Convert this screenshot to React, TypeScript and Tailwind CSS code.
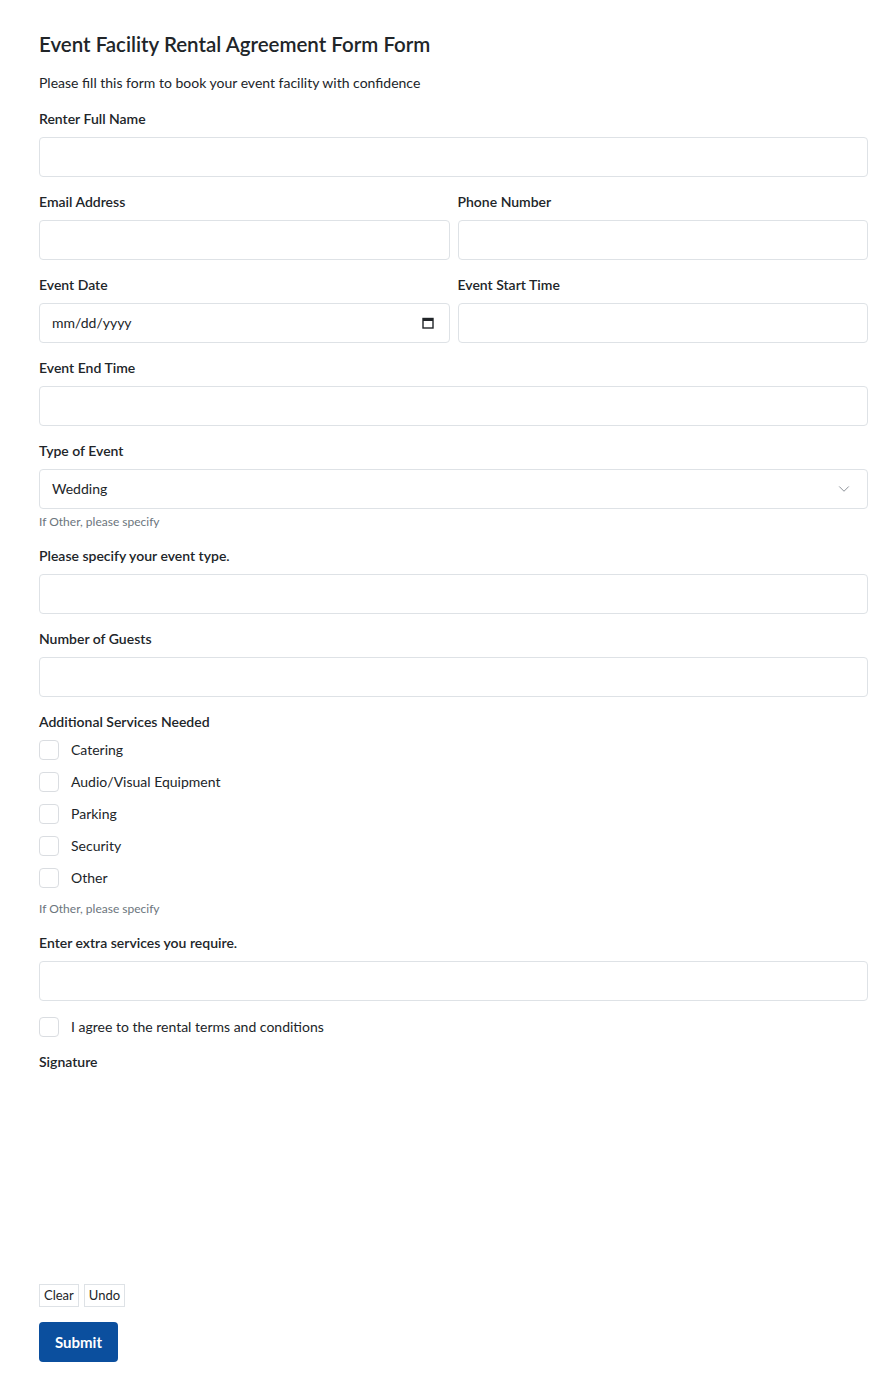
import { ChevronDown } from 'lucide-react';

const font = { fontFamily: 'Lato, "Noto Sans", sans-serif' };

function Label({ children }: { children: React.ReactNode }) {
  return <label className="block h-[21px] text-sm leading-[21px] font-semibold text-[#212529] mb-2">{children}</label>;
}

function TextInput() {
  return <input type="text" className="block w-full h-10 rounded-[4px] border border-[#dee2e6] bg-white px-3 text-sm text-[#212529] outline-none" />;
}

function Field({ label, children, help }: { label: string; children?: React.ReactNode; help?: string }) {
  return (
    <div className="mb-[14px] min-w-0">
      <Label>{label}</Label>
      {children ?? <TextInput />}
      {help && <p className="mt-1 h-[18px] text-xs leading-[18px] text-[#6c757d]">{help}</p>}
    </div>
  );
}

function Check({ label }: { label: string }) {
  return (
    <label className="flex items-center h-6 gap-3 text-sm text-[#212529]">
      <span className="w-5 h-5 rounded-[4px] border border-[#dadde1] bg-white shrink-0" />
      <span>{label}</span>
    </label>
  );
}

export default function App() {
  const services = ['Catering', 'Audio/Visual Equipment', 'Parking', 'Security', 'Other'];

  return (
    <div className="min-h-screen bg-white" style={font}>
      <form className="pl-[39px] pr-4 pt-[29px] pb-4" onSubmit={e => e.preventDefault()}>
        <h1 className="text-[20.5px] leading-[30px] font-semibold text-[#212529] mb-[13px]">Event Facility Rental Agreement Form Form</h1>
        <p className="text-sm leading-[21px] text-[#212529] mb-[15px]">Please fill this form to book your event facility with confidence</p>

        <Field label="Renter Full Name" />
        <div className="grid grid-cols-2 gap-x-2">
          <Field label="Email Address" />
          <Field label="Phone Number" />
          <Field label="Event Date">
            <div className="flex items-center justify-between w-full h-10 rounded-[4px] border border-[#dee2e6] bg-white pl-3 pr-[14px] text-sm text-[#212529]">
              <span>mm/dd/yyyy</span>
              <svg width="14" height="14" viewBox="0 0 14 14" fill="none">
                <rect x="2" y="2.5" width="10" height="9.5" stroke="#212529" strokeWidth="1.4" />
                <rect x="2" y="2.5" width="10" height="2.5" fill="#212529" />
              </svg>
            </div>
          </Field>
          <Field label="Event Start Time" />
        </div>
        <Field label="Event End Time" />
        <Field label="Type of Event" help="If Other, please specify">
          <div className="flex items-center justify-between w-full h-10 rounded-[4px] border border-[#dee2e6] bg-white pl-3 pr-[14px] text-sm text-[#212529]">
            <span>Wedding</span>
            <ChevronDown size={18} strokeWidth={1.3} className="text-[#8a8f96]" />
          </div>
        </Field>
        <Field label="Please specify your event type." />
        <Field label="Number of Guests" />

        <div className="mb-[14px]">
          <label className="block h-[21px] text-sm leading-[21px] font-semibold text-[#212529] mb-[6px]">Additional Services Needed</label>
          <div className="flex flex-col gap-2">
            {services.map(s => <Check key={s} label={s} />)}
          </div>
          <p className="mt-[10px] h-[18px] text-xs leading-[18px] text-[#6c757d]">If Other, please specify</p>
        </div>

        <Field label="Enter extra services you require." />

        <div className="mt-[13px] mb-[12px]">
          <Check label="I agree to the rental terms and conditions" />
        </div>

        <div>
          <Label>Signature</Label>
          <div className="h-[204px] w-full bg-white" />
          <div className="flex gap-[5px]">
            <button type="button" className="h-[23px] px-[4px] border border-[#dee2e6] bg-white text-[13px] text-[#212529]">Clear</button>
            <button type="button" className="h-[23px] px-[4px] border border-[#dee2e6] bg-white text-[13px] text-[#212529]">Undo</button>
          </div>
        </div>

        <button type="submit" className="mt-[15px] h-10 w-[79px] rounded-[4px] bg-[#0b4f9e] text-[15px] font-bold text-white">Submit</button>
      </form>
    </div>
  );
}
